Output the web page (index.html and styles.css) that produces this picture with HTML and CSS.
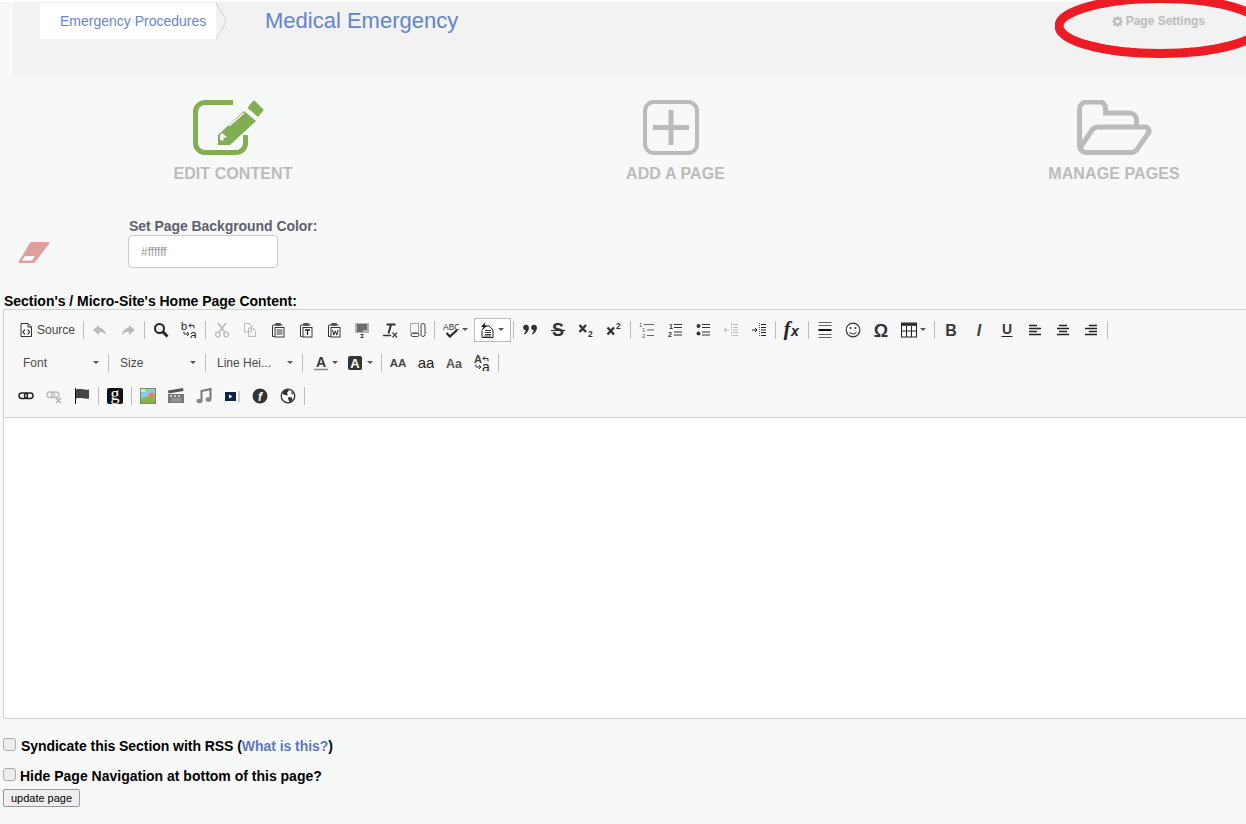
FILE: index.html
```html
<!doctype html>
<html lang="en">
<head>
  <meta charset="utf-8">
  <title>Medical Emergency | Edit Content</title>
  <link rel="stylesheet" href="styles.css">
</head>
<body>
<svg class="sprite" xmlns="http://www.w3.org/2000/svg">
  <symbol id="i-source" viewBox="0 0 16 16"><path d="M3 1.500h7l3.500 3.500v9.500H3z" fill="#fff" stroke="#333"/><path d="M10 1.500V5h3.500" fill="none" stroke="#333"/><path d="M7 7.500 5 10l2 2.500M9.500 7.500l2 2.500-2 2.500" fill="none" stroke="#222" stroke-width="1.200"/></symbol>
  <symbol id="i-undo" viewBox="0 0 16 16"><path d="M7 3 1 8l6 5v-3c3 0 5 .5 7 3-.5-4-3-7-7-7.500z" fill="#bbb"/></symbol>
  <symbol id="i-redo" viewBox="0 0 16 16"><path d="M9 3l6 5-6 5v-3c-3 0-5 .5-7 3 .5-4 3-7 7-7.500z" fill="#bbb"/></symbol>
  <symbol id="i-find" viewBox="0 0 16 16"><circle cx="6.500" cy="6.500" r="4.500" fill="none" stroke="#222" stroke-width="2"/><path d="m10 10 4.500 4.500" stroke="#222" stroke-width="2.800"/></symbol>
  <symbol id="i-replace" viewBox="0 0 16 16"><text x="0" y="8" font-size="11" fill="#222">b</text><text x="9" y="16.500" font-size="12" fill="#222">a</text><path d="M8 3.500h5v3M8 3.500l2-2M8 3.500l2 2M8 12H3V9.500M8 12l-2-2M8 12l-2 2" fill="none" stroke="#333"/></symbol>
  <symbol id="i-cut" viewBox="0 0 16 16"><path d="m4 1 7 9.500M12 1 5 10.500" stroke="#bbb" stroke-width="1.500"/><circle cx="3.800" cy="12.500" r="2.300" fill="none" stroke="#bbb" stroke-width="1.300"/><circle cx="12.200" cy="12.500" r="2.300" fill="none" stroke="#bbb" stroke-width="1.300"/></symbol>
  <symbol id="i-copy" viewBox="0 0 16 16"><path d="M2.500 1.500h5l2 2V10h-7zM6.500 6h4.500l2.500 2.500v6h-7z" fill="#f8f8f8" stroke="#bbb"/></symbol>
  <symbol id="i-paste" viewBox="0 0 16 16"><path d="M2.500 3H5M11 3h1.500" stroke="#333"/><path d="M2.500 3.500v11h2" fill="none" stroke="#333"/><rect x="5" y="1" width="6" height="3" rx="1" fill="#555"/><rect x="5" y="5.500" width="9" height="9.500" fill="#fff" stroke="#333"/><path d="M6.500 8h6M6.500 10h6M6.500 12h6" stroke="#333"/></symbol>
  <symbol id="i-paste-t" viewBox="0 0 16 16"><path d="M2.500 3H5M11 3h1.500" stroke="#333"/><path d="M2.500 3.500v11h2" fill="none" stroke="#333"/><rect x="5" y="1" width="6" height="3" rx="1" fill="#555"/><rect x="5" y="5.500" width="9" height="9.500" fill="#fff" stroke="#333"/><path d="M7 8h5M9.500 8v5" stroke="#222" stroke-width="1.300"/></symbol>
  <symbol id="i-paste-w" viewBox="0 0 16 16"><path d="M2.500 3H5M11 3h1.500" stroke="#333"/><path d="M2.500 3.500v11h2" fill="none" stroke="#333"/><rect x="5" y="1" width="6" height="3" rx="1" fill="#555"/><rect x="5" y="5.500" width="9" height="9.500" fill="#fff" stroke="#333"/><path d="m6.500 8 1.300 5 1.500-4 1.500 4 1.300-5" fill="none" stroke="#222"/></symbol>
  <symbol id="i-template" viewBox="0 0 16 16"><rect x="1" y="1" width="14" height="10" fill="#b4b4b4"/><path d="M3 3h10M3 5h10M3 7h10M3 9h6" stroke="#222"/><path d="M6.500 12.500h3M8 12.500v3M6.500 15.500h3" stroke="#333"/></symbol>
  <symbol id="i-removeformat" viewBox="0 0 16 16"><path d="M4.500 2.500h9M9 2.500 6.500 11.500" stroke="#333" stroke-width="2"/><path d="M1 13.500h8" stroke="#333" stroke-width="1.500"/><path d="m10.500 10.500 4.500 5M15 10.500l-4.500 5" stroke="#444" stroke-width="1.200"/></symbol>
  <symbol id="i-select" viewBox="0 0 16 16"><rect x=".500" y="1.500" width="8" height="9" fill="none" stroke="#555" stroke-dasharray="1 1"/><rect x="1" y="11.500" width="8" height="3" rx="1.500" fill="none" stroke="#444"/><rect x="11" y="1.500" width="4" height="13" rx="2" fill="none" stroke="#444"/></symbol>
  <symbol id="i-spell" viewBox="0 0 16 16"><text x="0" y="7.500" font-size="8.500" fill="#333">ABC</text><path d="m3.500 11 3.500 3.500 7-6.500" fill="none" stroke="#222" stroke-width="2"/></symbol>
  <symbol id="i-wand" viewBox="0 0 16 16"><path d="M6 4h4l4 4v7.500H3V9" fill="#fff" stroke="#222"/><path d="M6 8.500h6M6 10.500h6M6 12.500h6M5 14h7" stroke="#444"/><path d="M6.500 0 2 5h2.500L2 9.500 8 3.500H5.500z" fill="#111"/></symbol>
  <symbol id="i-quote" viewBox="0 0 16 16"><circle cx="4" cy="5.500" r="2.800" fill="#333"/><path d="M6.800 5.500c0 3.500-2 6-4.500 7l-.5-1c1.500-1 2-2.500 2-4z" fill="#333"/><circle cx="12" cy="5.500" r="2.800" fill="#333"/><path d="M14.800 5.500c0 3.500-2 6-4.500 7l-.5-1c1.500-1 2-2.500 2-4z" fill="#333"/></symbol>
  <symbol id="i-strike" viewBox="0 0 16 16"><text x="8" y="14" font-size="18" font-weight="700" text-anchor="middle" fill="#333">S</text><path d="M1 8.500h14" stroke="#333" stroke-width="1.200"/></symbol>
  <symbol id="i-sub" viewBox="0 0 16 16"><path d="m1.500 3 6.500 7M8 3l-6.500 7" stroke="#333" stroke-width="2.400"/><text x="10" y="14.500" font-size="8.500" font-weight="700" fill="#333">2</text></symbol>
  <symbol id="i-sup" viewBox="0 0 16 16"><path d="m1.500 5.500 6.500 7M8 5.500l-6.500 7" stroke="#333" stroke-width="2.400"/><text x="10" y="7" font-size="8.500" font-weight="700" fill="#333">2</text></symbol>
  <symbol id="i-multilevel" viewBox="0 0 16 16"><text x="0" y="5" font-size="6" fill="#555">1</text><text x="3" y="10" font-size="6" fill="#555">1</text><text x="3" y="15.500" font-size="6" fill="#555">2</text><path d="M5 2.500h10M8 8h7M8 13.500h7" stroke="#666"/></symbol>
  <symbol id="i-numlist" viewBox="0 0 16 16"><text x="2" y="7" font-size="7" font-weight="700" fill="#333">1</text><text x="1" y="14.500" font-size="7" font-weight="700" fill="#333">2</text><path d="M7 2.500h8M7 5.500h8M7 10h8M7 13h8" stroke="#333" stroke-width="1.200"/></symbol>
  <symbol id="i-bullist" viewBox="0 0 16 16"><circle cx="3.500" cy="4" r="2" fill="#333"/><circle cx="3.500" cy="11.500" r="2" fill="#333"/><path d="M7 2.500h8M7 5.500h8M7 10h8M7 13h8" stroke="#333" stroke-width="1.200"/></symbol>
  <symbol id="i-outdent" viewBox="0 0 16 16"><path d="M1 8h5M1 8l2-2M1 8l2 2" fill="none" stroke="#bbb"/><path d="M8.500 1v14" stroke="#bbb" stroke-dasharray="1 1"/><path d="M10 2.500h5M10 5.500h5M10 8h5M10 10.500h5M10 13.500h5" stroke="#bbb"/></symbol>
  <symbol id="i-indent" viewBox="0 0 16 16"><path d="M1 8h5M6 8 4 6M6 8l-2 2" fill="none" stroke="#222"/><path d="M8.500 1v14" stroke="#555" stroke-dasharray="1 1"/><path d="M10 2.500h5M10 5.500h5M10 8h5M10 10.500h5M10 13.500h5" stroke="#222"/></symbol>
  <symbol id="i-fx" viewBox="0 0 20 20"><text x="1.500" y="16" font-size="21" font-weight="700" font-style="italic" fill="#222" class="serif">f</text><text x="9" y="16" font-size="14" font-weight="700" font-style="italic" fill="#222">x</text></symbol>
  <symbol id="i-hr" viewBox="0 0 16 16"><path d="M1.500 .5h13M1.500 3.500h13M1.500 12.500h13M1.500 15.500h13" stroke="#666"/><path d="M1.500 8h13" stroke="#111" stroke-width="2"/></symbol>
  <symbol id="i-smile" viewBox="0 0 16 16"><circle cx="8" cy="8" r="6.800" fill="none" stroke="#333" stroke-width="1.200"/><circle cx="5.500" cy="6" r="1" fill="#333"/><circle cx="10.500" cy="6" r="1" fill="#333"/><path d="M4.500 10c1.500 2.500 5.500 2.500 7 0" fill="none" stroke="#333"/></symbol>
  <symbol id="i-omega" viewBox="0 0 16 16"><text x="8" y="14.500" font-size="18" font-weight="700" text-anchor="middle" fill="#333">Ω</text></symbol>
  <symbol id="i-table" viewBox="0 0 16 16"><rect x=".500" y="1" width="15" height="14" fill="#fff" stroke="#222"/><path d="M.500 2.500h15" stroke="#222" stroke-width="2.500"/><path d="M.500 9h15M5.500 4v11M10.500 4v11" stroke="#222"/></symbol>
  <symbol id="i-bold" viewBox="0 0 16 16"><text x="8" y="13.500" font-size="16" font-weight="700" text-anchor="middle" fill="#3a3a3a">B</text></symbol>
  <symbol id="i-italic" viewBox="0 0 16 16"><text x="8" y="13.500" font-size="16" font-weight="700" font-style="italic" text-anchor="middle" fill="#444">I</text></symbol>
  <symbol id="i-underline" viewBox="0 0 16 16"><text x="8" y="12" font-size="14" font-weight="700" text-anchor="middle" fill="#3a3a3a">U</text><path d="M2.500 14.500h11" stroke="#222"/></symbol>
  <symbol id="i-left" viewBox="0 0 16 16"><path d="M2 2.500h8M2 5.500h12M2 8.500h8M2 11.500h12" stroke="#222" stroke-width="1.300" transform="translate(0 1)"/></symbol>
  <symbol id="i-center" viewBox="0 0 16 16"><path d="M4 2.500h8M2 5.500h12M4 8.500h8M2 11.500h12" stroke="#222" stroke-width="1.300" transform="translate(0 1)"/></symbol>
  <symbol id="i-right" viewBox="0 0 16 16"><path d="M6 2.500h8M2 5.500h12M6 8.500h8M2 11.500h12" stroke="#222" stroke-width="1.300" transform="translate(0 1)"/></symbol>
  <symbol id="i-textcolor" viewBox="0 0 16 16"><text x="8" y="12" font-size="14" font-weight="700" text-anchor="middle" fill="#333">A</text><path d="M1 14.500h14" stroke="#888" stroke-width="1.500"/></symbol>
  <symbol id="i-bgcolor" viewBox="0 0 16 16"><rect x="1" y="1" width="14" height="14" rx="2" fill="#333"/><text x="8" y="13" font-size="13" font-weight="700" text-anchor="middle" fill="#fff">A</text></symbol>
  <symbol id="i-upper" viewBox="0 0 16 16"><text x="8" y="12" font-size="11.500" font-weight="700" text-anchor="middle" fill="#444">AA</text></symbol>
  <symbol id="i-lower" viewBox="0 0 16 16"><text x="8" y="12.500" font-size="15" text-anchor="middle" fill="#222">aa</text></symbol>
  <symbol id="i-capital" viewBox="0 0 16 16"><text x="8" y="12.500" font-size="12.500" font-weight="700" text-anchor="middle" fill="#555">Aa</text></symbol>
  <symbol id="i-case" viewBox="0 0 16 16"><text x="0" y="8" font-size="11" font-weight="700" fill="#444">A</text><text x="8" y="17" font-size="14" fill="#222">a</text><path d="M9 3.500h5v3M9 3.500l2-2M9 3.500l2 2M7 12H2V9.500M7 12l-2-2M7 12l-2 2" fill="none" stroke="#333"/></symbol>
  <symbol id="i-link" viewBox="0 0 16 16"><rect x="1" y="5" width="8.500" height="5.500" rx="2.700" fill="none" stroke="#222" stroke-width="1.500"/><rect x="6.500" y="5" width="8.500" height="5.500" rx="2.700" fill="none" stroke="#222" stroke-width="1.500"/></symbol>
  <symbol id="i-unlink" viewBox="0 0 16 16"><rect x="1" y="4" width="7.500" height="5.500" rx="2.700" fill="none" stroke="#bbb" stroke-width="1.400"/><rect x="5.500" y="4" width="7.500" height="5.500" rx="2.700" fill="none" stroke="#bbb" stroke-width="1.400"/><path d="m10 10 5 5M15 10l-5 5" stroke="#aaa" stroke-width="1.300"/></symbol>
  <symbol id="i-flag" viewBox="0 0 16 16"><path d="M1.500 0v16" stroke="#111"/><path d="M2 1.500c4-1.500 8 1 13 0v9c-5 1-9-1.500-13 0z" fill="#444"/></symbol>
  <symbol id="i-google" viewBox="0 0 16 16"><rect width="16" height="16" rx="2" fill="#111"/><text x="8" y="12" font-size="18" text-anchor="middle" fill="#fff" class="serif">g</text></symbol>
  <symbol id="i-image" viewBox="0 0 16 16"><rect width="16" height="16" fill="#5a9e5a"/><rect x="1" y="1" width="14" height="11" fill="#8cc8ec"/><path d="M1 11c4-3 9-2 14 0v4H1z" fill="#8cb04c"/><path d="m8 7 3.500-3L15 7v3H9z" fill="#e8883c"/><rect x="1" y="1" width="4" height="3" fill="#f4e4a0"/></symbol>
  <symbol id="i-video" viewBox="0 0 16 16"><rect y="6" width="16" height="9" fill="#777"/><path d="M0 2.500 15 0l.5 3L.5 5.500z" fill="#555"/><path d="M2 7h2v2H2zM6 7h2v2H6zM10 7h2v2h-2z" fill="#ccc"/><path d="M3 11h10M3 13h10" stroke="#aaa"/></symbol>
  <symbol id="i-music" viewBox="0 0 16 16"><path d="M5.500 13V3l9-2v10" fill="none" stroke="#777" stroke-width="2"/><ellipse cx="3.500" cy="13" rx="3" ry="2.300" fill="#888"/><ellipse cx="12.500" cy="11.500" rx="3" ry="2.300" fill="#888"/></symbol>
  <symbol id="i-youtube" viewBox="0 0 16 16"><rect x="1" y="3" width="15" height="11" fill="#fff"/><rect x="1" y="4" width="11" height="9" fill="#0f2248"/><path d="m5 6.500 3.500 2-3.500 2z" fill="#fff"/><path d="M15 3v11" stroke="#999"/></symbol>
  <symbol id="i-flash" viewBox="0 0 16 16"><circle cx="8" cy="8" r="7.500" fill="#333"/><text x="8" y="12.500" font-size="12" font-weight="700" font-style="italic" text-anchor="middle" fill="#fff">f</text></symbol>
  <symbol id="i-globe" viewBox="0 0 16 16"><circle cx="8" cy="8" r="6.800" fill="#fff" stroke="#333" stroke-width="1.300"/><path d="M3 4c2-2 5-3 6-1.500L7 5 8 7.500 5 7 2.500 6zM8 9l4 .5.500 2L10 14.500 8.500 12zM11 3l3 3-2 .5z" fill="#333"/></symbol>
</svg>

<div class="topbar">
  <a class="crumb">Emergency Procedures</a>
  <svg class="crumb-tip" width="11" height="36" viewBox="0 0 11 36"><path d="M0 0 10.500 18 0 36" fill="none" stroke="#cfcfcf"/></svg>
  <h1 class="page-title">Medical Emergency</h1>
  <a class="page-settings">
    <svg class="gear" viewBox="0 0 12 12" width="11" height="11"><circle cx="6" cy="6" r="3.500" fill="none" stroke="#bbb" stroke-width="2.400"/><path d="M6 0v12M0 6h12M1.800 1.800l8.400 8.400M10.200 1.800l-8.400 8.400" stroke="#bbb" stroke-width="1.800" stroke-dasharray="2 8"/></svg>
    Page Settings
  </a>
</div>
<svg class="circled" width="191" height="64" viewBox="0 0 191 64"><ellipse cx="105" cy="26" rx="101" ry="27.500" fill="none" stroke="#ed1c24" stroke-width="9"/></svg>

<div class="tabs">
  <a class="tab">
    <svg width="71" height="55" viewBox="0 0 71 55"><path d="M40 2.500H12A9.500 9.500 0 0 0 2.500 12v31a9.500 9.500 0 0 0 9.500 9.500h31a9.500 9.500 0 0 0 9.500-9.500V35" fill="none" stroke="#82ad52" stroke-width="5"/><path d="m25 35 26-24 12 10-26 24H25z" fill="#82ad52"/><path d="M54.500 8 60 1q1-1 2 0l8 8q1 1 0 2l-5 6z" fill="#82ad52"/><path d="m36 26 15-13" stroke="#f7f9f9" stroke-width="1.500"/><path d="m29 33 5 4-3 1-1 3-3-1v-5z" fill="#f7f9f9"/></svg>
    <span class="tab-label">EDIT CONTENT</span>
  </a>
  <a class="tab">
    <svg width="56" height="55" viewBox="0 0 56 55"><rect x="2" y="2" width="52" height="51" rx="9" fill="none" stroke="#bbb" stroke-width="4"/><path d="M10 27.500h36M28 10v35" stroke="#bbb" stroke-width="5"/></svg>
    <span class="tab-label">ADD A PAGE</span>
  </a>
  <a class="tab tab-last">
    <svg width="75" height="55" viewBox="0 0 75 55"><path d="M2.500 47V9a7 7 0 0 1 7-7h13a6 6 0 0 1 6 6v5h24a7 7 0 0 1 7 7v7" fill="none" stroke="#bbb" stroke-width="5"/><path d="M3 48 15 30a8 8 0 0 1 6-3h47a4 4 0 0 1 3.500 6L61 48a8 8 0 0 1-6 4.500H9A7 7 0 0 1 3 48z" fill="none" stroke="#bbb" stroke-width="5"/></svg>
    <span class="tab-label">MANAGE PAGES</span>
  </a>
</div>

<div class="bgcolor">
  <svg class="eraser" width="32" height="22" viewBox="0 0 32 22"><path d="M14 1h16q2 0 1 2L18 20q-1 2-3 2H2q-2 0-1-2L12 2q1-1 2-1z" fill="#dfa09c"/><path d="M7 15h10l-3 4.500H4z" fill="#fff"/></svg>
  <div class="bgcolor-field">
    <label class="field-label">Set Page Background Color:</label>
    <input class="color-input" type="text" placeholder="#ffffff">
  </div>
</div>

<div class="section-label">Section's / Micro-Site's Home Page Content:</div>
<div class="editor">
  <div class="toolbar">
    <div class="tb-row">
      <a class="btn btn-source"><svg class="ic"><use href="#i-source"/></svg><span>Source</span></a><i class="sep"></i>
      <a class="btn"><svg class="ic"><use href="#i-undo"/></svg></a><a class="btn"><svg class="ic"><use href="#i-redo"/></svg></a><i class="sep"></i>
      <a class="btn"><svg class="ic"><use href="#i-find"/></svg></a><a class="btn"><svg class="ic"><use href="#i-replace"/></svg></a><i class="sep"></i>
      <a class="btn"><svg class="ic"><use href="#i-cut"/></svg></a><a class="btn"><svg class="ic"><use href="#i-copy"/></svg></a><a class="btn"><svg class="ic"><use href="#i-paste"/></svg></a><a class="btn"><svg class="ic"><use href="#i-paste-t"/></svg></a><a class="btn"><svg class="ic"><use href="#i-paste-w"/></svg></a><a class="btn"><svg class="ic"><use href="#i-template"/></svg></a><a class="btn"><svg class="ic"><use href="#i-removeformat"/></svg></a><a class="btn"><svg class="ic"><use href="#i-select"/></svg></a><i class="sep"></i>
      <a class="btn btn-drop btn-spell"><svg class="ic"><use href="#i-spell"/></svg><b class="caret"></b></a>
      <a class="btn btn-drop btn-on"><svg class="ic"><use href="#i-wand"/></svg><b class="caret"></b></a><i class="sep"></i>
      <a class="btn"><svg class="ic"><use href="#i-quote"/></svg></a><a class="btn"><svg class="ic"><use href="#i-strike"/></svg></a><a class="btn"><svg class="ic"><use href="#i-sub"/></svg></a><a class="btn"><svg class="ic"><use href="#i-sup"/></svg></a><i class="sep"></i>
      <a class="btn"><svg class="ic"><use href="#i-multilevel"/></svg></a><a class="btn"><svg class="ic"><use href="#i-numlist"/></svg></a><a class="btn"><svg class="ic"><use href="#i-bullist"/></svg></a><a class="btn"><svg class="ic"><use href="#i-outdent"/></svg></a><a class="btn"><svg class="ic"><use href="#i-indent"/></svg></a><i class="sep"></i>
      <a class="btn"><svg class="ic ic-lg"><use href="#i-fx"/></svg></a><i class="sep"></i>
      <a class="btn"><svg class="ic"><use href="#i-hr"/></svg></a><a class="btn"><svg class="ic"><use href="#i-smile"/></svg></a><a class="btn"><svg class="ic"><use href="#i-omega"/></svg></a><a class="btn btn-drop btn-table"><svg class="ic"><use href="#i-table"/></svg><b class="caret"></b></a><i class="sep"></i>
      <a class="btn"><svg class="ic"><use href="#i-bold"/></svg></a><a class="btn"><svg class="ic"><use href="#i-italic"/></svg></a><a class="btn"><svg class="ic"><use href="#i-underline"/></svg></a><a class="btn"><svg class="ic"><use href="#i-left"/></svg></a><a class="btn"><svg class="ic"><use href="#i-center"/></svg></a><a class="btn"><svg class="ic"><use href="#i-right"/></svg></a><i class="sep"></i>
    </div>
    <div class="tb-row tb-row-combos">
      <a class="combo"><span>Font</span><b class="caret"></b></a><i class="sep"></i>
      <a class="combo"><span>Size</span><b class="caret"></b></a><i class="sep"></i>
      <a class="combo"><span>Line Hei...</span><b class="caret"></b></a><i class="sep"></i>
      <a class="btn btn-drop btn-color"><svg class="ic"><use href="#i-textcolor"/></svg><b class="caret"></b></a>
      <a class="btn btn-drop btn-bg"><svg class="ic"><use href="#i-bgcolor"/></svg><b class="caret"></b></a><i class="sep"></i>
      <a class="btn"><svg class="ic"><use href="#i-upper"/></svg></a><a class="btn"><svg class="ic"><use href="#i-lower"/></svg></a><a class="btn"><svg class="ic"><use href="#i-capital"/></svg></a><a class="btn"><svg class="ic"><use href="#i-case"/></svg></a><i class="sep"></i>
    </div>
    <div class="tb-row">
      <a class="btn"><svg class="ic"><use href="#i-link"/></svg></a><a class="btn"><svg class="ic"><use href="#i-unlink"/></svg></a><a class="btn"><svg class="ic"><use href="#i-flag"/></svg></a><i class="sep"></i>
      <a class="btn"><svg class="ic"><use href="#i-google"/></svg></a><i class="sep"></i>
      <a class="btn"><svg class="ic"><use href="#i-image"/></svg></a><a class="btn"><svg class="ic"><use href="#i-video"/></svg></a><a class="btn"><svg class="ic"><use href="#i-music"/></svg></a><a class="btn"><svg class="ic"><use href="#i-youtube"/></svg></a><a class="btn"><svg class="ic"><use href="#i-flash"/></svg></a><a class="btn"><svg class="ic"><use href="#i-globe"/></svg></a><i class="sep"></i>
    </div>
  </div>
  <div class="editor-body"></div>
</div>

<div class="option option-rss"><input type="checkbox"><label>Syndicate this Section with RSS (<a class="help">What is this?</a>)</label></div>
<div class="option"><input type="checkbox"><label>Hide Page Navigation at bottom of this page?</label></div>
<button class="update-btn">update page</button>
</body>
</html>
```

FILE: styles.css
```css
*{box-sizing:border-box;}
html,body{margin:0;padding:0;height:100%;overflow:hidden;}
body{position:relative;padding-top:2px;background:#f7f9f9;font-family:"Liberation Sans",Arial,sans-serif;color:#000;}
body::before{content:"";position:absolute;top:0;left:0;right:0;height:2px;background:#fff;}
.sprite{display:none;}
svg text{font-family:"Liberation Sans",Arial,sans-serif;}
svg text.serif{font-family:"Liberation Serif",serif;}

/* header */
.topbar{display:flex;align-items:flex-start;height:74px;margin-left:13px;padding:1px 0 0 27px;background:#f2f2f2;border-bottom-left-radius:4px;}
.crumb{display:block;width:176px;height:36px;padding-left:20px;line-height:36px;font-size:14px;color:#6b85c7;background:#fff;border-radius:3px 0 0 3px;}
.crumb-tip{flex:none;}
.page-title{margin:0 0 0 38px;font-size:22px;font-weight:400;line-height:36px;color:#6484c9;}
.page-settings{display:flex;align-items:center;gap:3px;margin-left:auto;margin-right:41px;margin-top:11px;font-size:12px;font-weight:700;line-height:14px;color:#bbb;}
.circled{position:absolute;top:0;left:1055px;}

/* big tabs */
.tabs{display:grid;grid-template-columns:440px 445px 432px;margin:24px 0 0 13px;}
.tab{display:flex;flex-direction:column;align-items:center;}
.tab svg{margin-right:9px;}
.tab-last svg{margin-right:0;}
.tab-label{margin-top:10px;font-size:16px;font-weight:700;line-height:18px;letter-spacing:.08px;color:#bbb;}

/* background colour */
.bgcolor{display:flex;align-items:flex-start;margin-top:35px;padding-left:18px;}
.eraser{margin-top:23px;}
.bgcolor-field{margin-left:78px;}
.field-label{display:block;padding-left:1px;font-size:14px;font-weight:700;line-height:16px;letter-spacing:-.06px;color:#5f5f6e;}
.color-input{display:block;width:150px;height:33px;margin-top:1px;padding:0 12px;border:1px solid #ccc;border-radius:4px;background:#fff;font:12px "Liberation Sans",Arial,sans-serif;}
.color-input::placeholder{color:#999;}

.section-label{margin:25px 0 0 4px;font-size:14px;font-weight:700;line-height:16px;letter-spacing:-.02px;}

/* editor */
.editor{margin:0 0 0 3px;border:1px solid #d1d1d1;border-right:0;}
.toolbar{height:108px;padding:3px 0 0 8px;background:#f8f8f8;border-bottom:1px solid #d1d1d1;overflow:hidden;}
.tb-row{display:flex;align-items:center;height:33px;}
.tb-row-combos{margin-left:2px;}
.btn{display:flex;align-items:center;justify-content:center;flex:none;width:28px;height:24px;}
.btn-source{width:69px;justify-content:flex-start;padding-left:6px;gap:3px;font-size:12px;color:#474747;}
.btn-drop{width:34px;justify-content:flex-start;padding-left:6px;gap:3px;}
.btn-spell{width:35px;}
.btn-table{width:37px;}
.btn-color{width:36px;padding-left:8px;}
.btn-bg{width:38px;gap:4px;}
.btn-on{width:37px;margin-left:2px;padding-left:4px;background:#fff;border:1px solid #bcbcbc;}
.ic{display:block;flex:none;width:16px;height:16px;}
.ic-lg{width:20px;height:20px;}
.caret{flex:none;width:0;height:0;border:3px solid transparent;border-top-color:#555;border-bottom:0;}
.sep{flex:none;width:1px;height:18px;margin:0 2px;background:#bcbcbc;}
.combo{display:flex;align-items:center;justify-content:space-between;flex:none;width:92px;height:24px;padding:0 7px 0 9px;font-size:12px;color:#484848;}

.editor-body{height:300px;background:#fff;}

/* footer */
.option{display:flex;align-items:center;height:16px;margin:14px 0 0 3px;font-size:14px;font-weight:700;}
.option-rss{margin-top:19px;letter-spacing:-.05px;}
.option input{appearance:none;width:13px;height:13px;margin:0 4px 3px 0;background:#ececec;border:1px solid #aaa;border-radius:3px;}
.option-rss input{margin-right:5px;}
.help{color:#5d78b8;}
.update-btn{display:block;width:77px;height:18px;margin:5px 0 0 3px;padding:0;border:1px solid #999;border-radius:2px;background:#efefef;font:11px "Liberation Sans",Arial,sans-serif;color:#000;}
```
